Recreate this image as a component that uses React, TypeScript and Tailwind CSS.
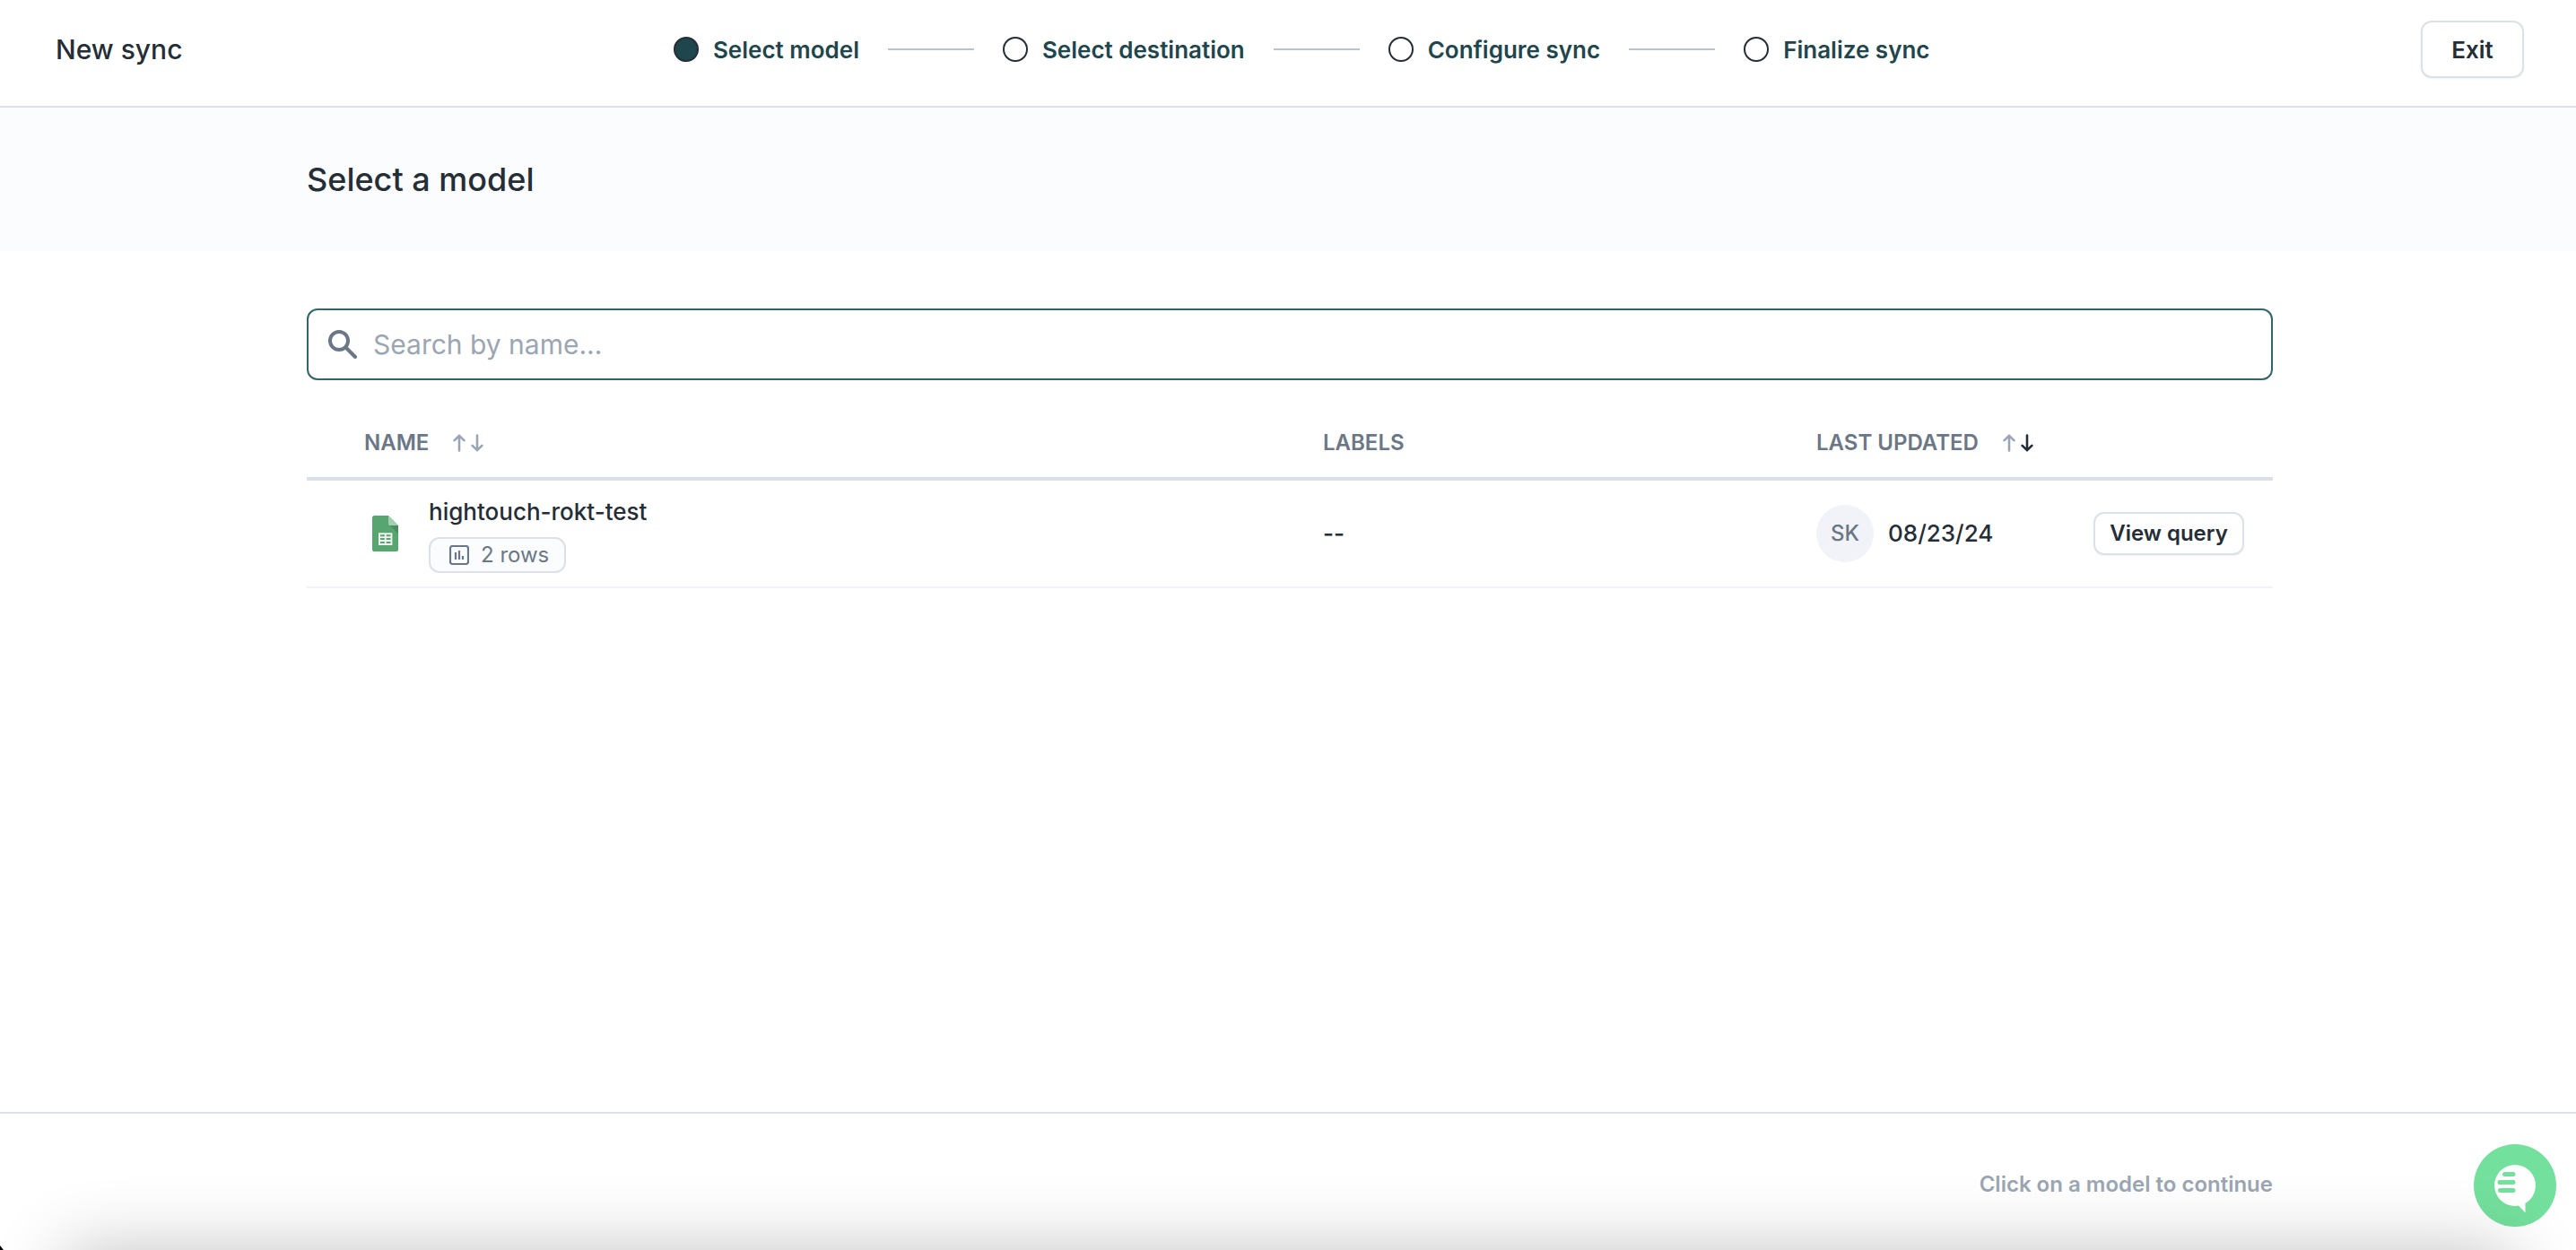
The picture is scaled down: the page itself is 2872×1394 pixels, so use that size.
import React from 'react'

const steps = ['Select model', 'Select destination', 'Configure sync', 'Finalize sync']

function SortArrow({ up, className }: { up?: boolean; className: string }) {
  return (
    <svg
      className={className}
      viewBox="0 0 16 20"
      width="16"
      height="20"
      fill="none"
      stroke="currentColor"
      strokeWidth="2.6"
      strokeLinecap="round"
      strokeLinejoin="round"
    >
      {up ? <path d="M8 18.500V1.800M2.600 7.200L8 1.800l5.400 5.400" /> : <path d="M8 1.500v16.700M2.600 12.800L8 18.200l5.400-5.400" />}
    </svg>
  )
}

function SheetsIcon() {
  return (
    <svg viewBox="0 0 29 40" width="29" height="40">
      <path d="M2.600 0H18l11 11v26.400a2.600 2.600 0 0 1-2.600 2.600H2.600A2.600 2.600 0 0 1 0 37.400V2.600A2.600 2.600 0 0 1 2.600 0z" fill="#57a56f" />
      <path d="M19 10.500L29 20V11z" fill="#4a8d5f" />
      <path d="M18 0l11 11h-8.400A2.600 2.600 0 0 1 18 8.400z" fill="#a1d0b1" />
      <path
        fillRule="evenodd"
        d="M7 19.300h15.400v13.700H7zM9 21.200v2h4.800v-2zM15.700 21.200v2h4.800v-2zM9 25.100v2h4.800v-2zM15.700 25.100v2h4.800v-2zM9 29v2h4.800v-2zM15.700 29v2h4.800v-2z"
        fill="#f1f1f1"
      />
    </svg>
  )
}

function SearchIcon() {
  return (
    <svg viewBox="0 0 32 32" width="32" height="32" fill="none" stroke="#6b7786" strokeWidth="4">
      <circle cx="12" cy="12" r="10" />
      <path d="M19.500 19.500l10.500 10.500" strokeLinecap="round" />
    </svg>
  )
}

function RowsIcon() {
  return (
    <svg viewBox="0 0 22 22" width="22" height="22" fill="none" stroke="#6b7786" strokeWidth="2.200">
      <rect x="1" y="1" width="20" height="20" rx="2.500" />
      <path d="M7 8v8M11 6v10M15 12v4" />
    </svg>
  )
}

function ChatIcon() {
  return (
    <svg viewBox="0 0 92 92" width="92" height="92">
      <circle cx="46" cy="46" r="46" fill="#74e09d" />
      <circle cx="46" cy="46" r="23" fill="#fff" />
      <path d="M49 67.500l8.500 9V63z" fill="#fff" />
      <path d="M34.500 33.500h9.500M29 42.500h15M29.500 51.500h14.500" stroke="#74e09d" strokeWidth="5" strokeLinecap="round" />
    </svg>
  )
}

export default function App() {
  return (
    <div className="relative flex h-[1394px] w-[2872px] flex-col overflow-hidden bg-white font-[Inter,sans-serif] text-[#252d36]">
      <header className="flex h-[120px] shrink-0 items-start justify-between border-b-2 border-[#dce0e7] pt-[23px] pr-[58px] pl-[62px]">
        <div className="flex h-16 items-center text-[30px] font-medium">New sync</div>
        <div className="flex h-16 items-center gap-8">
          {steps.map((step, i) => (
            <React.Fragment key={step}>
              {i > 0 && <div className="h-0.5 w-24 bg-[#b8c3ce]" />}
              <div className="flex items-center gap-4">
                <div className={`size-7 rounded-full border-2 border-[#252d36] ${i === 0 ? 'bg-[#1f464d]' : 'bg-white'}`} />
                <span className="text-[26px] font-semibold text-[#1f464d]">{step}</span>
              </div>
            </React.Fragment>
          ))}
        </div>
        <button className="h-16 w-[115px] rounded-xl border-2 border-[#dce0e7] text-[26px] font-semibold shadow-xs">Exit</button>
      </header>

      <section className="flex h-40 shrink-0 items-center bg-[#fbfcfe] px-[342px]">
        <h1 className="text-[36px] font-medium">Select a model</h1>
      </section>

      <main className="flex-1 pt-16 pr-[338px] pl-[342px]">
        <div className="flex h-20 items-center gap-[18px] rounded-xl border-2 border-[#32666b] pl-[22px]">
          <SearchIcon />
          <span className="text-[30px] text-[#9ba6b3]">Search by name...</span>
        </div>

        <div className="mt-6 grid h-[88px] grid-cols-[1069px_550px_1fr] items-center border-b-4 border-[#dce0e7] pt-[7px] pl-16 text-2xl font-semibold text-[#6b7786]">
          <div className="flex items-center">
            NAME
            <SortArrow up className="ml-[26px] text-[#9ba6b3]" />
            <SortArrow className="ml-1 text-[#9ba6b3]" />
          </div>
          <div>LABELS</div>
          <div className="flex items-center">
            LAST UPDATED
            <SortArrow up className="ml-[26px] text-[#9ba6b3]" />
            <SortArrow className="ml-1 text-[#252d36]" />
          </div>
        </div>

        <div className="grid h-[120px] grid-cols-[1069px_550px_1fr] items-center border-b-2 border-[#f2f3f8] pl-16 text-[26px]">
          <div className="flex items-center gap-[33px] pl-[9px]">
            <SheetsIcon />
            <div className="flex flex-col items-start pt-0.5 pl-px">
              <span className="leading-9 font-medium">hightouch-rokt-test</span>
              <span className="mt-2.5 flex h-10 w-[153px] items-center gap-[13px] rounded-xl border-2 border-[#dce0e7] bg-[#fbfcfe] pl-[21px] text-2xl text-[#6b7786]">
                <RowsIcon />2 rows
              </span>
            </div>
          </div>
          <div className="pb-0.5 font-medium">--</div>
          <div className="flex items-center">
            <div className="flex size-16 items-center justify-center rounded-full bg-[#f2f3f8] text-2xl font-medium text-[#6b7786]">SK</div>
            <span className="ml-4 pb-0.5 font-medium">08/23/24</span>
            <button className="mr-8 ml-auto h-12 w-[168px] rounded-xl border-2 border-[#dce0e7] text-2xl font-semibold shadow-xs">
              View query
            </button>
          </div>
        </div>
      </main>

      <footer className="flex h-[154px] shrink-0 items-center justify-end border-t-2 border-[#dce0e7] pt-1.5 pr-[338px] text-2xl font-semibold text-[#9ba6b3]">
        Click on a model to continue
      </footer>

      <div className="absolute right-[22px] bottom-[26px]">
        <ChatIcon />
      </div>
      {/* shadow cast upwards from below the fold */}
      <div className="pointer-events-none absolute top-full right-[72px] left-[72px] h-40 shadow-[0_0_80px_rgba(0,0,0,0.24)]" />
      <svg className="absolute bottom-0 left-0" width="4" height="5" viewBox="0 0 4 5">
        <path d="M0 0l4 5H0z" fill="#000" />
      </svg>
    </div>
  )
}
